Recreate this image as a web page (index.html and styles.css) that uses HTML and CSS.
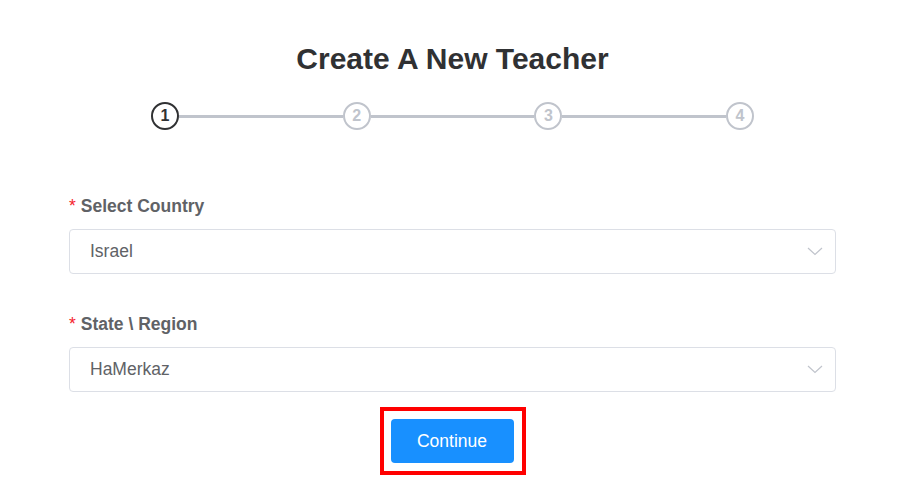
FILE: index.html
```html
<!DOCTYPE html>
<html>
<head>
<meta charset="utf-8">
<link rel="stylesheet" href="styles.css">
</head>
<body>
<div class="page">
  <h1 class="title">Create A New Teacher</h1>
  <div class="steps">
    <div class="step active">1</div>
    <div class="line"></div>
    <div class="step">2</div>
    <div class="line"></div>
    <div class="step">3</div>
    <div class="line"></div>
    <div class="step">4</div>
  </div>
  <form class="form">
    <div class="field first">
      <label class="label"><span class="req">*</span>Select Country</label>
      <div class="select">
        <span class="value">Israel</span>
        <svg class="chev" width="16" height="9" viewBox="0 0 16 9"><path d="M1 1 L8 7.5 L15 1" fill="none" stroke="#c0c4cc" stroke-width="1.2"/></svg>
      </div>
    </div>
    <div class="field">
      <label class="label"><span class="req">*</span>State \ Region</label>
      <div class="select">
        <span class="value">HaMerkaz</span>
        <svg class="chev" width="16" height="9" viewBox="0 0 16 9"><path d="M1 1 L8 7.5 L15 1" fill="none" stroke="#c0c4cc" stroke-width="1.2"/></svg>
      </div>
    </div>
    <div class="actions">
      <div class="highlight">
        <button type="button" class="btn">Continue</button>
      </div>
    </div>
  </form>
</div>
</body>
</html>
```
FILE: styles.css
```css
* { box-sizing: border-box; }
html, body { margin: 0; padding: 0; background: #fff; }
body { font-family: "Liberation Sans", Arial, sans-serif; }

.page {
  width: 767px;
  margin-left: 69px;
  padding-top: 42px;
}

.title {
  margin: 0;
  text-align: center;
  font-size: 30px;
  line-height: 34px;
  font-weight: bold;
  color: #303133;
}

.steps {
  display: flex;
  align-items: center;
  margin: 26px 82px 0 82px;
}

.step {
  width: 28px;
  height: 28px;
  flex: 0 0 28px;
  border: 2px solid #c0c4cc;
  border-radius: 50%;
  display: flex;
  align-items: center;
  justify-content: center;
  font-size: 16px;
  font-weight: bold;
  color: #c0c4cc;
}
.step.active {
  border-color: #303133;
  color: #303133;
}

.line {
  flex: 1;
  height: 3px;
  background: #c0c4cc;
}

.form { margin: 0; }

.field { margin-top: 38px; }
.field.first { margin-top: 64px; }

.label {
  display: block;
  font-size: 17.5px;
  line-height: 24px;
  font-weight: bold;
  color: #606266;
}
.req {
  color: #f5222d;
  margin-right: 5px;
  font-weight: normal;
}

.select {
  margin-top: 11px;
  height: 45px;
  border: 1px solid #dcdfe6;
  border-radius: 4px;
  display: flex;
  align-items: center;
  justify-content: space-between;
  padding: 0 12px 0 20px;
}
.value {
  font-size: 17.5px;
  color: #606266;
}
.chev { display: block; }

.actions {
  display: flex;
  justify-content: center;
  margin-top: 15px;
}
.highlight {
  border: 4px solid #ff0000;
  padding: 8px 8px 8px 7px;
}
.btn {
  display: block;
  width: 123px;
  height: 44px;
  border: none;
  border-radius: 4px;
  background: #1890ff;
  color: #fff;
  font-family: "Liberation Sans", Arial, sans-serif;
  font-size: 17.5px;
  padding: 0;
}
```
